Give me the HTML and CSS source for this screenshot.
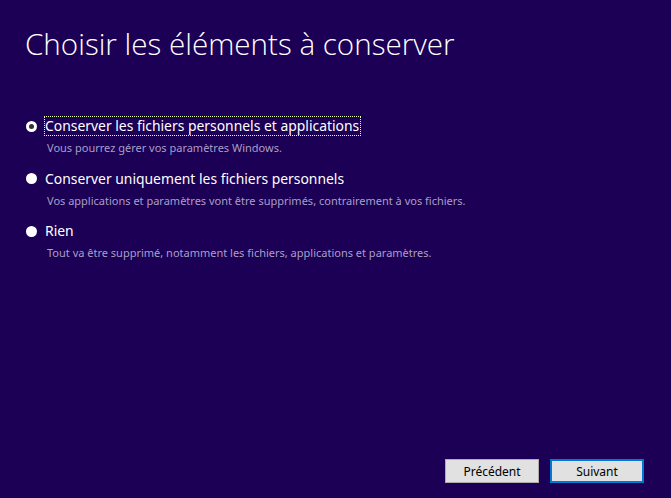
FILE: index.html
```html
<!DOCTYPE html>
<html lang="fr">
<head>
<meta charset="utf-8">
<link rel="stylesheet" href="styles.css">
</head>
<body>
<div class="page">
  <h1 class="title">Choisir les éléments à conserver</h1>
  <div class="options">
    <div class="option">
      <div class="option-row">
        <span class="radio checked"></span>
        <span class="label focused">Conserver les fichiers personnels et applications</span>
      </div>
      <div class="desc">Vous pourrez gérer vos paramètres Windows.</div>
    </div>
    <div class="option">
      <div class="option-row">
        <span class="radio"></span>
        <span class="label">Conserver uniquement les fichiers personnels</span>
      </div>
      <div class="desc">Vos applications et paramètres vont être supprimés, contrairement à vos fichiers.</div>
    </div>
    <div class="option">
      <div class="option-row">
        <span class="radio"></span>
        <span class="label">Rien</span>
      </div>
      <div class="desc">Tout va être supprimé, notamment les fichiers, applications et paramètres.</div>
    </div>
  </div>
  <div class="spacer"></div>
  <div class="buttons">
    <button class="btn">Précédent</button>
    <button class="btn primary">Suivant</button>
  </div>
</div>
</body>
</html>
```
FILE: styles.css
```css
html, body {
  margin: 0;
  padding: 0;
  height: 100%;
}
body {
  background: #1b0055;
  font-family: "Noto Sans", "Open Sans", sans-serif;
  color: #ffffff;
}
.page {
  height: 498px;
  display: flex;
  flex-direction: column;
  box-sizing: border-box;
}
.title {
  margin: 0;
  padding: 22px 0 0 25px;
  font-family: "Open Sans", sans-serif;
  font-weight: 300;
  font-size: 29.6px;
  line-height: 44px;
  color: #ffffff;
}
.options {
  margin-top: 49px;
  padding-left: 26px;
  display: flex;
  flex-direction: column;
  gap: 11.5px;
}
.option-row {
  display: flex;
  align-items: center;
  height: 22px;
}
.radio {
  width: 11px;
  height: 11px;
  border-radius: 50%;
  background: #ffffff;
  box-sizing: border-box;
  margin-right: 7px;
  flex: none;
  position: relative;
}
.radio.checked::after {
  content: "";
  position: absolute;
  left: 3px;
  top: 3px;
  width: 5px;
  height: 5px;
  border-radius: 50%;
  background: #333040;
}
.label {
  font-size: 13.9px;
  line-height: 18px;
  padding: 0 1px 0 0;
  border: 1px dotted transparent;
}
.label.focused {
  border-color: #e4ffaa;
}
.desc {
  margin-top: 3px;
  padding-left: 21px;
  font-size: 11px;
  line-height: 16px;
  color: #a99fc6;
}
.spacer {
  flex: 1;
}
.buttons {
  display: flex;
  justify-content: flex-end;
  gap: 11px;
  padding: 0 27px 15px 0;
}
.btn {
  width: 94px;
  height: 24px;
  box-sizing: border-box;
  background: #e1e1e1;
  border: 1px solid #adadad;
  font-family: "Noto Sans", sans-serif;
  font-size: 12px;
  color: #000000;
  padding: 0;
}
.btn.primary {
  border: 2px solid #0078d7;
}
```
